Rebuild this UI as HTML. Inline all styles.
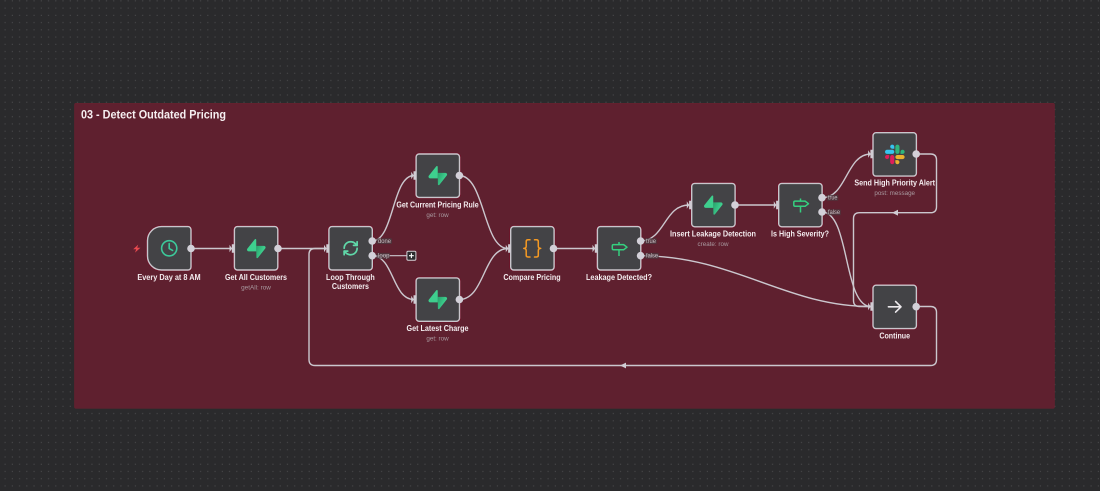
<!DOCTYPE html>
<html><head><meta charset="utf-8"><title>03 - Detect Outdated Pricing</title>
<style>
html,body{margin:0;padding:0;background:#2a2a2c;width:1100px;height:491px;overflow:hidden}
svg{display:block;filter:blur(.35px)}
text{font-family:"Liberation Sans",sans-serif}
.l{font-size:8px;font-weight:700;fill:#f3ebee;text-anchor:middle}
.s{font-size:6.5px;fill:#a99aa0;text-anchor:middle}
.e{font-size:6px;fill:#c8bec3}
.n{fill:#434346;stroke:#c9c6cc;stroke-width:1.4}
.h{fill:none;stroke:#6d1429;stroke-width:1}
.w{fill:none;stroke:#cbc7ce;stroke-width:1.4}
.d{fill:#d3d0d8}
.p{fill:#d0ccd3}
</style></head><body>
<svg xmlns="http://www.w3.org/2000/svg" width="1100" height="491" viewBox="0 0 1100 491">
<defs>
<pattern id="g" x="1.4" y="4.4" width="7.24" height="7.24" patternUnits="userSpaceOnUse"><rect x="3.2" y="3.2" width="1" height="1" fill="#505052"/></pattern>
<linearGradient id="sb" x1="53.97" y1="54.97" x2="94.16" y2="71.83" gradientUnits="userSpaceOnUse"><stop offset="0" stop-color="#2aa56e"/><stop offset="1" stop-color="#3ECF8E"/></linearGradient>
<symbol id="supa" viewBox="0 0 109 113" overflow="visible">
<path d="M63.7076 110.284C60.8481 113.885 55.0502 111.912 54.9813 107.314L53.9738 40.0627L99.1935 40.0627C107.384 40.0627 111.952 49.5228 106.859 55.9374L63.7076 110.284Z" fill="url(#sb)"/>
<path d="M45.317 2.07103C48.1765 -1.53037 53.9745 0.442937 54.0434 5.041L54.4849 72.2922H9.83113C1.64038 72.2922 -2.92775 62.8321 2.1655 56.4175L45.317 2.07103Z" fill="#3ECF8E"/>
</symbol>
</defs>
<rect width="1100" height="491" fill="#2a2a2c"/>
<rect width="1100" height="491" fill="url(#g)"/>
<rect x="74.5" y="103.3" width="980" height="305" rx="1.5" fill="#5f202f" stroke="#66222f" stroke-width=".6"/>
<text x="81" y="118.7" font-size="11.5" font-weight="700" fill="#f6eff1" textLength="145" lengthAdjust="spacingAndGlyphs">03 - Detect Outdated Pricing</text>

<!-- edges -->
<g class="w">
<path d="M191 248.5H232"/>
<path d="M278 248.5H326"/>
<path d="M916 306.5H930.5Q936.5 306.5 936.5 312.5V359.5Q936.5 365.5 930.5 365.5H315Q309 365.5 309 359.5V254.5Q309 248.5 315 248.5H326"/>
<path d="M916 154H930.5Q936.5 154 936.5 160V206.7Q936.5 212.7 930.5 212.7H859.5Q853.5 212.7 853.5 218.7V300.5Q853.5 306.5 859.5 306.5H871"/>
<path d="M372 241C394 241 392 175.5 414 175.5"/>
<path d="M372 255.7C394 255.7 392 299.5 414 299.5"/>
<path d="M372 255.7H406.5" stroke-width="1.1"/>
<path d="M459 175.5C485 175.5 483 248.5 508 248.5"/>
<path d="M459 299.5C485 299.5 483 248.5 508 248.5"/>
<path d="M553.5 248.5H595"/>
<path d="M640 241C665 241 664 205 689 205"/>
<path d="M640 255.7C735 256 785 306.5 871 306.5"/>
<path d="M735 205H776"/>
<path d="M822 197.7C847 197.7 846 154 871 154"/>
<path d="M822 212C850 212 843 306.5 871 306.5"/>
</g>
<polygon class="p" points="620,365.5 626,362.6 626,368.4"/>
<polygon class="p" points="892,212.7 898,209.8 898,215.6"/>

<!-- node halos -->
<g class="h">
<path d="M161.5 225.6H188a3.9 3.9 0 0 1 3.9 3.9V267a3.9 3.9 0 0 1-3.9 3.9H161.5a15 15 0 0 1-15-15V240.6a15 15 0 0 1 15-15Z"/>
<rect x="233.4" y="225.6" width="45.4" height="45.3" rx="4"/>
<rect x="327.9" y="225.6" width="45.4" height="45.3" rx="4"/>
<rect x="415.1" y="153" width="45.4" height="45.3" rx="4"/>
<rect x="415.1" y="276.9" width="45.4" height="45.3" rx="4"/>
<rect x="509.7" y="225.6" width="45.4" height="45.3" rx="4"/>
<rect x="596.4" y="225.6" width="45.4" height="45.3" rx="4"/>
<rect x="690.7" y="182.4" width="45.4" height="45.3" rx="4"/>
<rect x="777.7" y="182.4" width="45.4" height="45.3" rx="4"/>
<rect x="872" y="131.7" width="45.4" height="45.3" rx="4"/>
<rect x="872" y="284.2" width="45.4" height="45.3" rx="4"/>
</g>

<!-- nodes -->
<path class="n" d="M161.5 226.6H188a3 3 0 0 1 3 3V267a3 3 0 0 1-3 3H161.5a14 14 0 0 1-14-14V240.6a14 14 0 0 1 14-14Z"/>
<rect class="n" x="234.4" y="226.6" width="43.4" height="43.4" rx="3"/>
<rect class="n" x="328.9" y="226.6" width="43.4" height="43.4" rx="3"/>
<rect class="n" x="416.1" y="154" width="43.4" height="43.4" rx="3"/>
<rect class="n" x="416.1" y="277.9" width="43.4" height="43.4" rx="3"/>
<rect class="n" x="510.7" y="226.6" width="43.4" height="43.4" rx="3"/>
<rect class="n" x="597.4" y="226.6" width="43.4" height="43.4" rx="3"/>
<rect class="n" x="691.7" y="183.4" width="43.4" height="43.4" rx="3"/>
<rect class="n" x="778.7" y="183.4" width="43.4" height="43.4" rx="3"/>
<rect class="n" x="873" y="132.7" width="43.4" height="43.4" rx="3"/>
<rect class="n" x="873" y="285.2" width="43.4" height="43.4" rx="3"/>

<!-- input ports -->
<g class="p">
<path d="M229.5 244.8L232 248.5L229.5 252.2Z M231.8 244.3H234.4V252.7H231.8Z"/>
<path d="M324 244.8L326.5 248.5L324 252.2Z M326.3 244.3H328.9V252.7H326.3Z"/>
<path d="M411.2 171.8L413.7 175.5L411.2 179.2Z M413.5 171.3H416.1V179.7H413.5Z"/>
<path d="M411.2 295.8L413.7 299.5L411.2 303.2Z M413.5 295.3H416.1V303.7H413.5Z"/>
<path d="M505.8 244.8L508.3 248.5L505.8 252.2Z M508.1 244.3H510.7V252.7H508.1Z"/>
<path d="M592.5 244.8L595 248.5L592.5 252.2Z M594.8 244.3H597.4V252.7H594.8Z"/>
<path d="M686.8 201.3L689.3 205L686.8 208.7Z M689.1 200.8H691.7V209.2H689.1Z"/>
<path d="M773.8 201.3L776.3 205L773.8 208.7Z M776.1 200.8H778.7V209.2H776.1Z"/>
<path d="M868.1 150.3L870.6 154L868.1 157.7Z M870.4 149.8H873V158.2H870.4Z"/>
<path d="M868.1 302.8L870.6 306.5L868.1 310.2Z M870.4 302.3H873V310.7H870.4Z"/>
</g>

<!-- edge label backgrounds -->
<g fill="#4a3a40" opacity=".75">
<rect x="376.5" y="238.2" width="15.5" height="5.8" rx="1"/>
<rect x="376.5" y="252.9" width="13.5" height="5.8" rx="1"/>
<rect x="644.8" y="238.2" width="12" height="5.8" rx="1"/>
<rect x="644.8" y="252.9" width="14" height="5.8" rx="1"/>
<rect x="826.8" y="194.9" width="11.5" height="5.8" rx="1"/>
<rect x="826.8" y="209.4" width="14" height="5.8" rx="1"/>
</g>

<!-- output ports -->
<g class="d">
<circle cx="191" cy="248.5" r="3.8"/>
<circle cx="278" cy="248.5" r="3.8"/>
<circle cx="372.2" cy="241" r="3.8"/>
<circle cx="372.2" cy="255.7" r="3.8"/>
<circle cx="459.4" cy="175.5" r="3.8"/>
<circle cx="459.4" cy="299.5" r="3.8"/>
<circle cx="553.5" cy="248.5" r="3.8"/>
<circle cx="640.6" cy="241" r="3.8"/>
<circle cx="640.6" cy="255.7" r="3.8"/>
<circle cx="735" cy="205" r="3.8"/>
<circle cx="822" cy="197.7" r="3.8"/>
<circle cx="822" cy="212" r="3.8"/>
<circle cx="916.2" cy="154" r="3.8"/>
<circle cx="916.2" cy="306.7" r="3.8"/>
</g>

<!-- plus -->
<rect x="406.9" y="251.2" width="9" height="9" rx="1.2" fill="#2b2b2d" stroke="#d4d1d6" stroke-width="1"/>
<path d="M411.4 253.3V258.1M409 255.7H413.8" stroke="#fff" stroke-width="1.1" fill="none"/>

<!-- trigger bolt -->
<polygon points="138.2,244.6 133.2,249.2 136.2,249.2 135,252.6 140.4,247.8 137.2,247.8" fill="#e8494f"/>

<!-- clock -->
<g fill="none" stroke="#3cc99a" stroke-width="1.6" stroke-linecap="round" stroke-linejoin="round">
<circle cx="169.2" cy="248.3" r="7.6"/>
<path d="M169.2 243.6V248.6L172.6 250.4"/>
</g>

<!-- supabase -->
<use href="#supa" x="247" y="239" width="18.6" height="19.3"/>
<use href="#supa" x="428.5" y="166" width="18.6" height="19.3"/>
<use href="#supa" x="428.5" y="290" width="18.6" height="19.3"/>
<use href="#supa" x="704" y="195.5" width="18.6" height="19.3"/>

<!-- loop -->
<g transform="translate(342,239.6) scale(.72)" fill="none" stroke="#5fd8a8" stroke-width="2.4" stroke-linecap="round" stroke-linejoin="round">
<path d="M3 12a9 9 0 0 1 9-9 9.75 9.75 0 0 1 6.74 2.74L21 8"/><path d="M21 3v5h-5"/>
<path d="M21 12a9 9 0 0 1-9 9 9.75 9.75 0 0 1-6.74-2.74L3 16"/><path d="M8 16H3v5"/>
</g>

<!-- braces -->
<g fill="none" stroke="#f59a23" stroke-width="1.5" stroke-linecap="round" stroke-linejoin="round">
<path d="M530 239.8H528Q526.2 239.8 526.2 241.6V246.2Q526.2 248.2 523.8 248.4Q526.2 248.6 526.2 250.7V255.3Q526.2 257 528 257H530"/>
<path d="M534.5 239.8H536.5Q538.3 239.8 538.3 241.6V246.2Q538.3 248.2 540.7 248.4Q538.3 248.6 538.3 250.7V255.3Q538.3 257 536.5 257H534.5"/>
</g>

<!-- signs -->
<g fill="none" stroke="#35d07f" stroke-width="1.5" stroke-linejoin="round">
<path d="M613.6 244.6H623.6L627 247.2L623.6 249.8H613.6Q612.3 249.8 612.3 248.5V245.9Q612.3 244.6 613.6 244.6Z"/>
<path d="M619 242V244.6M619 249.8V256"/>
<path d="M795.1 201.1H805.1L808.5 203.7L805.1 206.3H795.1Q793.8 206.3 793.8 205V202.4Q793.8 201.1 795.1 201.1Z"/>
<path d="M800.5 198.5V201.1M800.5 206.3V212.5"/>
</g>

<!-- arrow -->
<path d="M888.4 306.8H901M895.6 301.5L901 306.8L895.6 312.1" fill="none" stroke="#ece9ec" stroke-width="1.6" stroke-linecap="round" stroke-linejoin="round"/>

<!-- slack -->
<g transform="translate(885,144.6) scale(.16)">
<path d="M25.8 77.6c0 7.1-5.8 12.9-12.9 12.9S0 84.7 0 77.6s5.8-12.9 12.9-12.9h12.9v12.9zm6.5 0c0-7.1 5.8-12.9 12.9-12.9s12.9 5.8 12.9 12.9v32.3c0 7.1-5.8 12.9-12.9 12.9s-12.9-5.8-12.9-12.9V77.6z" fill="#E01E5A"/>
<path d="M45.2 25.8c-7.1 0-12.9-5.8-12.9-12.9S38.1 0 45.2 0s12.9 5.8 12.9 12.9v12.9H45.2zm0 6.5c7.1 0 12.9 5.8 12.9 12.9s-5.8 12.9-12.9 12.9H12.9C5.8 58.1 0 52.3 0 45.2s5.8-12.9 12.9-12.9h32.3z" fill="#36C5F0"/>
<path d="M97 45.2c0-7.1 5.8-12.9 12.9-12.9s12.9 5.8 12.9 12.9-5.8 12.9-12.9 12.9H97V45.2zm-6.5 0c0 7.1-5.8 12.9-12.9 12.9s-12.9-5.8-12.9-12.9V12.9C64.7 5.8 70.5 0 77.6 0s12.9 5.8 12.9 12.9v32.3z" fill="#2EB67D"/>
<path d="M77.6 97c7.1 0 12.9 5.8 12.9 12.9s-5.8 12.9-12.9 12.9-12.9-5.8-12.9-12.9V97h12.9zm0-6.5c-7.1 0-12.9-5.8-12.9-12.9s5.8-12.9 12.9-12.9h32.3c7.1 0 12.9 5.8 12.9 12.9s-5.8 12.9-12.9 12.9H77.6z" fill="#ECB22E"/>
</g>

<!-- labels -->
<text class="l" x="169" y="280" textLength="63.3" lengthAdjust="spacingAndGlyphs">Every Day at 8 AM</text>
<text class="l" x="256" y="280" textLength="62" lengthAdjust="spacingAndGlyphs">Get All Customers</text>
<text class="s" x="256" y="289.5" textLength="29.7" lengthAdjust="spacingAndGlyphs">getAll: row</text>
<text class="l" x="350.4" y="280" textLength="48.7" lengthAdjust="spacingAndGlyphs">Loop Through</text>
<text class="l" x="350.4" y="289" textLength="37" lengthAdjust="spacingAndGlyphs">Customers</text>
<text class="l" x="437.5" y="207.7" textLength="82.3" lengthAdjust="spacingAndGlyphs">Get Current Pricing Rule</text>
<text class="s" x="437.5" y="217" textLength="22.3" lengthAdjust="spacingAndGlyphs">get: row</text>
<text class="l" x="437.5" y="331" textLength="62" lengthAdjust="spacingAndGlyphs">Get Latest Charge</text>
<text class="s" x="437.5" y="340.3" textLength="22.3" lengthAdjust="spacingAndGlyphs">get: row</text>
<text class="l" x="532" y="280" textLength="57.3" lengthAdjust="spacingAndGlyphs">Compare Pricing</text>
<text class="l" x="619" y="280" textLength="66" lengthAdjust="spacingAndGlyphs">Leakage Detected?</text>
<text class="l" x="713" y="236.3" textLength="86" lengthAdjust="spacingAndGlyphs">Insert Leakage Detection</text>
<text class="s" x="713" y="245.8" textLength="31" lengthAdjust="spacingAndGlyphs">create: row</text>
<text class="l" x="800" y="236.3" textLength="58" lengthAdjust="spacingAndGlyphs">Is High Severity?</text>
<text class="l" x="894.7" y="185.7" textLength="80.7" lengthAdjust="spacingAndGlyphs">Send High Priority Alert</text>
<text class="s" x="894.7" y="195.2" textLength="40.7" lengthAdjust="spacingAndGlyphs">post: message</text>
<text class="l" x="894.7" y="338.5" textLength="30.7" lengthAdjust="spacingAndGlyphs">Continue</text>

<!-- edge labels -->
<text class="e" x="378" y="242.8" textLength="13" lengthAdjust="spacingAndGlyphs">done</text>
<text class="e" x="378" y="257.5" textLength="11.5" lengthAdjust="spacingAndGlyphs">loop</text>
<text class="e" x="646" y="242.8" textLength="10" lengthAdjust="spacingAndGlyphs">true</text>
<text class="e" x="646" y="257.5" textLength="12" lengthAdjust="spacingAndGlyphs">false</text>
<text class="e" x="828" y="199.5" textLength="9.5" lengthAdjust="spacingAndGlyphs">true</text>
<text class="e" x="828" y="214" textLength="12" lengthAdjust="spacingAndGlyphs">false</text>
</svg>
</body></html>
